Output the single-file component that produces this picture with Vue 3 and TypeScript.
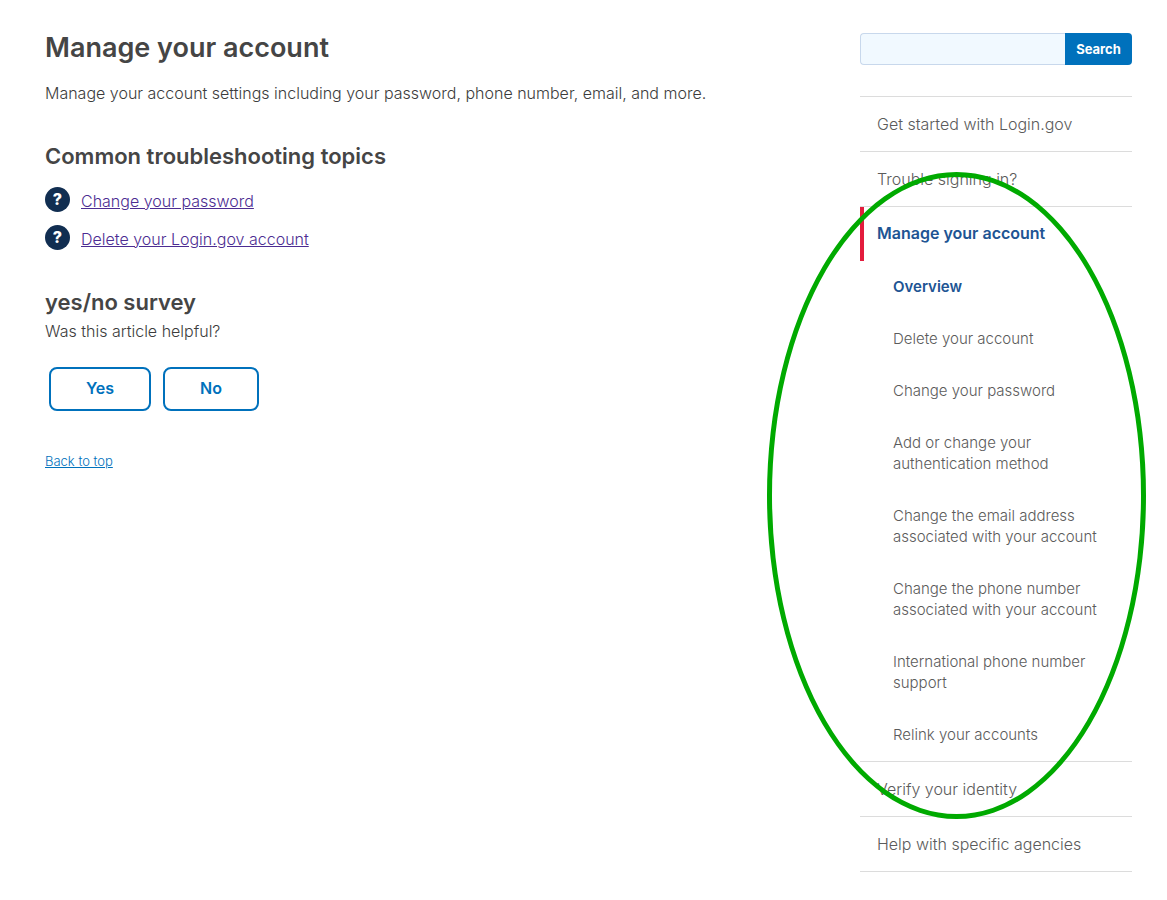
<script setup lang="ts">
import { ref } from 'vue'

interface NavItem {
  label: string
  current?: boolean
  children?: NavItem[]
}

const topics: string[] = ['Change your password', 'Delete your Login.gov account']

const navigation: NavItem[] = [
  { label: 'Get started with Login.gov' },
  { label: 'Trouble signing in?' },
  {
    label: 'Manage your account',
    current: true,
    children: [
      { label: 'Overview', current: true },
      { label: 'Delete your account' },
      { label: 'Change your password' },
      { label: 'Add or change your authentication method' },
      { label: 'Change the email address associated with your account' },
      { label: 'Change the phone number associated with your account' },
      { label: 'International phone number support' },
      { label: 'Relink your accounts' },
    ],
  },
  { label: 'Verify your identity' },
  { label: 'Help with specific agencies' },
]

const query = ref('')
</script>

<template>
  <div id="top" class="page">
    <main class="content">
      <h1>Manage your account</h1>
      <p class="intro">
        Manage your account settings including your password, phone number, email, and more.
      </p>

      <section class="topics">
        <h2>Common troubleshooting topics</h2>
        <ul>
          <li v-for="topic in topics" :key="topic">
            <span class="badge" aria-hidden="true">?</span>
            <a href="#">{{ topic }}</a>
          </li>
        </ul>
      </section>

      <section class="survey">
        <h2>yes/no survey</h2>
        <p>Was this article helpful?</p>
        <div class="answers">
          <button type="button">Yes</button>
          <button type="button">No</button>
        </div>
      </section>

      <a class="back" href="#top">Back to top</a>
    </main>

    <aside class="sidebar">
      <form class="search" role="search" @submit.prevent>
        <input v-model="query" type="search" aria-label="Search" />
        <button type="submit">Search</button>
      </form>

      <nav aria-label="Help topics">
        <ul class="menu">
          <li v-for="item in navigation" :key="item.label">
            <a href="#" :class="{ current: item.current }">{{ item.label }}</a>
            <ul v-if="item.children" class="submenu">
              <li v-for="child in item.children" :key="child.label">
                <a href="#" :class="{ current: child.current }">{{ child.label }}</a>
              </li>
            </ul>
          </li>
        </ul>
      </nav>
      <div class="highlight" aria-hidden="true"></div>
    </aside>
  </div>
</template>

<style>
body {
  margin: 0;
  background: #fff;
}
</style>

<style scoped>
.page {
  display: flex;
  justify-content: space-between;
  gap: 32px;
  padding: 33px 35px 28px 45px;
  color: #3c3c3c;
  font-family: Inter, "Liberation Sans", sans-serif;
  font-size: 16px;
  font-weight: 300;
  line-height: 22px;
}

h1,
h2,
p,
ul {
  margin: 0;
  padding: 0;
}

ul {
  list-style: none;
}

.content {
  flex: 1;
  min-width: 0;
}

h1,
h2 {
  color: #454545;
  font-weight: 600;
}

h1 {
  font-size: 27px;
  line-height: 30px;
}

h2 {
  font-size: 22px;
  line-height: 28px;
}

.intro {
  margin-top: 19px;
}

.topics {
  margin-top: 38px;
}

.topics ul {
  display: grid;
  gap: 12px;
  margin-top: 16px;
}

.topics li {
  display: flex;
  align-items: center;
  gap: 11px;
  height: 26px;
}

.topics a {
  color: #4c2c92;
  padding-top: 3px;
}

.badge {
  width: 25px;
  height: 25px;
  border-radius: 50%;
  background: #112e51;
  color: #fff;
  font-size: 16px;
  font-weight: 800;
  line-height: 25px;
  text-align: center;
}

.survey {
  margin-top: 38px;
}

.survey p {
  margin-top: 4px;
}

.answers {
  display: flex;
  gap: 12px;
  margin: 25px 4px 0;
}

.answers button {
  height: 44px;
  padding: 0 35px 2px;
  border: 2px solid #0071bc;
  border-radius: 8px;
  background: #fff;
  color: #0071bc;
  font: 600 16px/22px Inter, "Liberation Sans", sans-serif;
}

.back {
  display: inline-block;
  margin-top: 39px;
  color: #0071bc;
  font-size: 13px;
}

.sidebar {
  position: relative;
  flex: 0 0 272px;
  min-width: 0;
}

.search {
  display: flex;
  height: 32px;
}

.search input {
  flex: 1;
  min-width: 0;
  box-sizing: border-box;
  border: 1px solid #c8d8ec;
  border-right: 0;
  border-radius: 4px 0 0 4px;
  background: #f1f9ff;
  padding: 0 8px;
  font: inherit;
  appearance: none;
}

.search button {
  width: 67px;
  padding: 0;
  border: 0;
  border-radius: 0 4px 4px 0;
  background: #0071bc;
  color: #fff;
  font: 700 13px/18px Inter, "Liberation Sans", sans-serif;
}

.menu {
  margin-top: 31px;
  border-bottom: 1px solid #dcdcdc;
}

.menu > li {
  border-top: 1px solid #dcdcdc;
}

.menu a {
  display: block;
  color: #5b5b5b;
  text-decoration: none;
}

.menu > li > a {
  padding: 16px 16px 16px 17px;
}

.menu > li > a.current {
  border-left: 4px solid #e31c3d;
  padding: 15px 16px 17px 13px;
}

.submenu a {
  padding: 15px 24px 16px 33px;
  font-size: 15px;
  line-height: 21px;
}

.menu a.current {
  color: #205493;
  font-weight: 600;
}

.highlight {
  position: absolute;
  top: 139px;
  left: -93px;
  right: -14px;
  box-sizing: border-box;
  height: 647px;
  border: 5px solid #0a0;
  border-radius: 50%;
  pointer-events: none;
}
</style>
